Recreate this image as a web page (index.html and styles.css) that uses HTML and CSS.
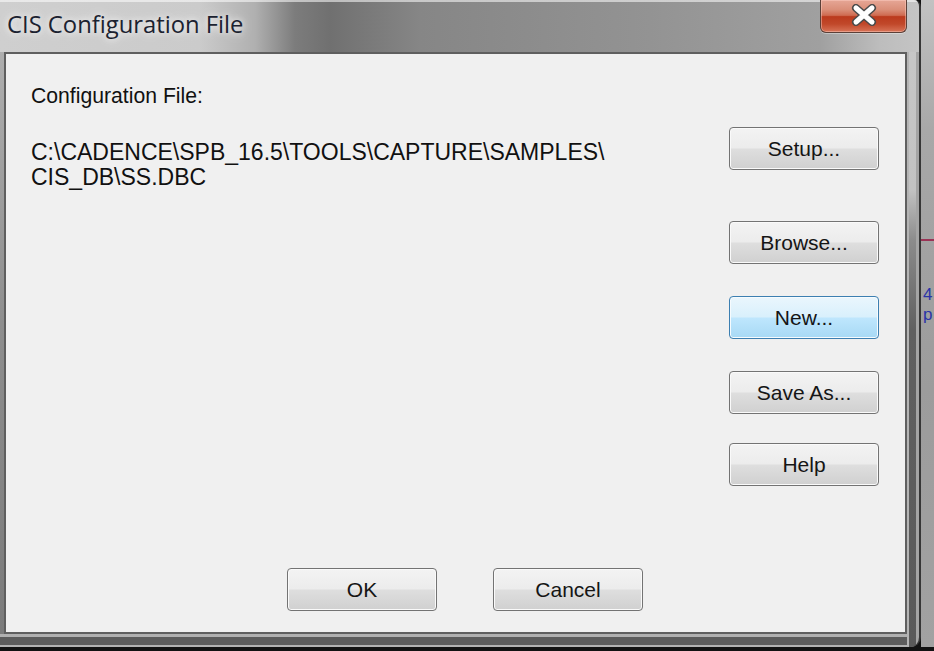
FILE: index.html
```html
<!DOCTYPE html>
<html>
<head>
<meta charset="utf-8">
<title>CIS Configuration File</title>
<link rel="stylesheet" href="styles.css">
</head>
<body>
<div class="screen">
  <div class="window">
    <div class="titlebar">
      <span class="title">CIS Configuration File</span>
      <div class="close">
        <svg class="close-x" width="26" height="22" viewBox="0 0 26 22">
          <path d="M5 4 L21 18 M21 4 L5 18" stroke="#4a4a4a" stroke-width="8" stroke-linecap="round" fill="none"/>
          <path d="M5 4 L21 18 M21 4 L5 18" stroke="#ffffff" stroke-width="5" stroke-linecap="round" fill="none"/>
        </svg>
      </div>
    </div>
    <div class="frame-body">
      <div class="client">
        <div class="main">
          <div class="info">
            <div class="label">Configuration File:</div>
            <div class="path">C:\CADENCE\SPB_16.5\TOOLS\CAPTURE\SAMPLES\<br>CIS_DB\SS.DBC</div>
          </div>
          <div class="side">
            <div class="btn btn-setup">Setup...</div>
            <div class="btn">Browse...</div>
            <div class="btn btn-hover">New...</div>
            <div class="btn btn-save">Save As...</div>
            <div class="btn">Help</div>
          </div>
        </div>
        <div class="footer">
          <div class="btn">OK</div>
          <div class="btn">Cancel</div>
        </div>
      </div>
    </div>
  </div>
  <div class="behind">
    <div class="red-line"></div>
    <div class="blue-text">4<br>p</div>
  </div>
</div>
</body>
</html>
```
FILE: styles.css
```css
* { box-sizing: border-box; }
html, body { margin: 0; padding: 0; }
body {
  width: 934px;
  height: 651px;
  overflow: hidden;
  background: #121212;
}
.screen {
  display: flex;
  align-items: flex-start;
  width: 934px;
  height: 651px;
  background: #121212;
}
.window {
  flex: none;
  width: 921px;
  height: 647px;
  display: flex;
  flex-direction: column;
  border-right: 2px solid #363636;
  border-radius: 0 7px 10px 0;
  overflow: hidden;
  background:
    linear-gradient(to right, #b4b4b4 0 2px, rgba(0,0,0,0) 2px 9px, #a4a4a4 9px 12px) right top / 12px 100% no-repeat,
    linear-gradient(to bottom, #c8c8c8 0, #c2c2c2 190px, #8c8c8c 240px, #606060 330px, #5a5a5a 100%) right top / 12px 100% no-repeat,
    linear-gradient(to bottom, #b0b0b0 0 3px, #5c5c5c 3px 11px, #b2b2b2 11px 13px) left bottom / 100% 13px no-repeat,
    linear-gradient(to bottom, #b4b4b4 0, #8e8e8e 50%, #7a7a7a 100%);
}
.titlebar {
  flex: none;
  height: 52px;
  display: flex;
  justify-content: space-between;
  align-items: flex-start;
  padding: 0 12px 0 7px;
  background:
    linear-gradient(to bottom, rgba(255,255,255,0.55) 0 2px, rgba(255,255,255,0) 2px),
    linear-gradient(to right, #cfcfcf 0, #cbcbcb 200px, #b0b0b0 255px, #7c7c7c 295px, #707070 330px, #868686 420px, #939393 650px, #a0a0a0 820px, #bdbdbd 880px, #c4c4c4 100%);
}
.title {
  padding-top: 9px;
  font-family: "Open Sans", "Noto Sans", sans-serif;
  font-size: 23.8px;
  line-height: 30px;
  color: #1b2230;
  text-shadow: 0 0 6px rgba(255,255,255,0.9), 0 0 14px rgba(255,255,255,0.7);
  white-space: nowrap;
}
.close {
  width: 87px;
  height: 33px;
  display: flex;
  align-items: center;
  justify-content: center;
  padding-bottom: 3px;
  border: 1px solid #5b4038;
  border-top: none;
  border-radius: 0 0 6px 6px;
  background: linear-gradient(to bottom, #e6a796 0, #da8f79 30%, #cf6b51 48%, #bb3a1d 52%, #c1482a 75%, #d87458 100%);
  box-shadow: inset 0 0 0 1px rgba(255,210,200,0.45), 0 1px 0 rgba(255,255,255,0.35);
}
.close-x { display: block; }
.frame-body {
  flex: 1;
  display: flex;
  padding: 0 12px 13px 4px;
}
.client {
  flex: 1;
  display: flex;
  flex-direction: column;
  border: 2px solid #5f5f5f;
  background: #f0f0f0;
  font-family: "Liberation Sans", Arial, sans-serif;
  color: #111;
}
.main {
  flex: 1;
  display: flex;
  justify-content: space-between;
}
.info {
  padding: 30px 0 0 25px;
}
.label {
  font-size: 21.2px;
  line-height: 24px;
}
.path {
  margin-top: 32px;
  font-size: 23px;
  line-height: 25px;
}
.side {
  display: flex;
  flex-direction: column;
  gap: 32px;
  margin: 73px 26px 0 0;
}
.btn {
  width: 150px;
  height: 43px;
  display: flex;
  align-items: center;
  justify-content: center;
  font-size: 21px;
  color: #151515;
  border: 1px solid #737373;
  border-radius: 4px;
  background: linear-gradient(to bottom, #f3f3f3 0, #ececec 48%, #dedede 52%, #d0d0d0 100%);
  box-shadow: inset 0 0 0 1px #fafafa;
}
.btn-setup { margin-bottom: 19px; }
.btn-save { margin-bottom: -3px; }
.btn-hover {
  border-color: #3c7fb1;
  background: linear-gradient(to bottom, #eaf6fd 0, #d9f0fc 48%, #bee6fd 52%, #a7d9f5 100%);
  box-shadow: inset 0 0 0 1px #f6fbfe;
}
.footer {
  display: flex;
  justify-content: center;
  gap: 56px;
  padding: 0 0 21px 19px;
}
.behind {
  flex: none;
  width: 13px;
  height: 647px;
  overflow: hidden;
  background: linear-gradient(to bottom, #c2c2c2 0, #a8a8a8 20%, #9c9c9c 60%, #a2a2a2 100%);
}
.red-line {
  height: 2px;
  margin-top: 239px;
  background: #9a3355;
}
.blue-text {
  margin-top: 44px;
  padding-left: 2px;
  font-family: "Liberation Sans", sans-serif;
  font-size: 17px;
  line-height: 20px;
  color: #2a34a8;
}
```
